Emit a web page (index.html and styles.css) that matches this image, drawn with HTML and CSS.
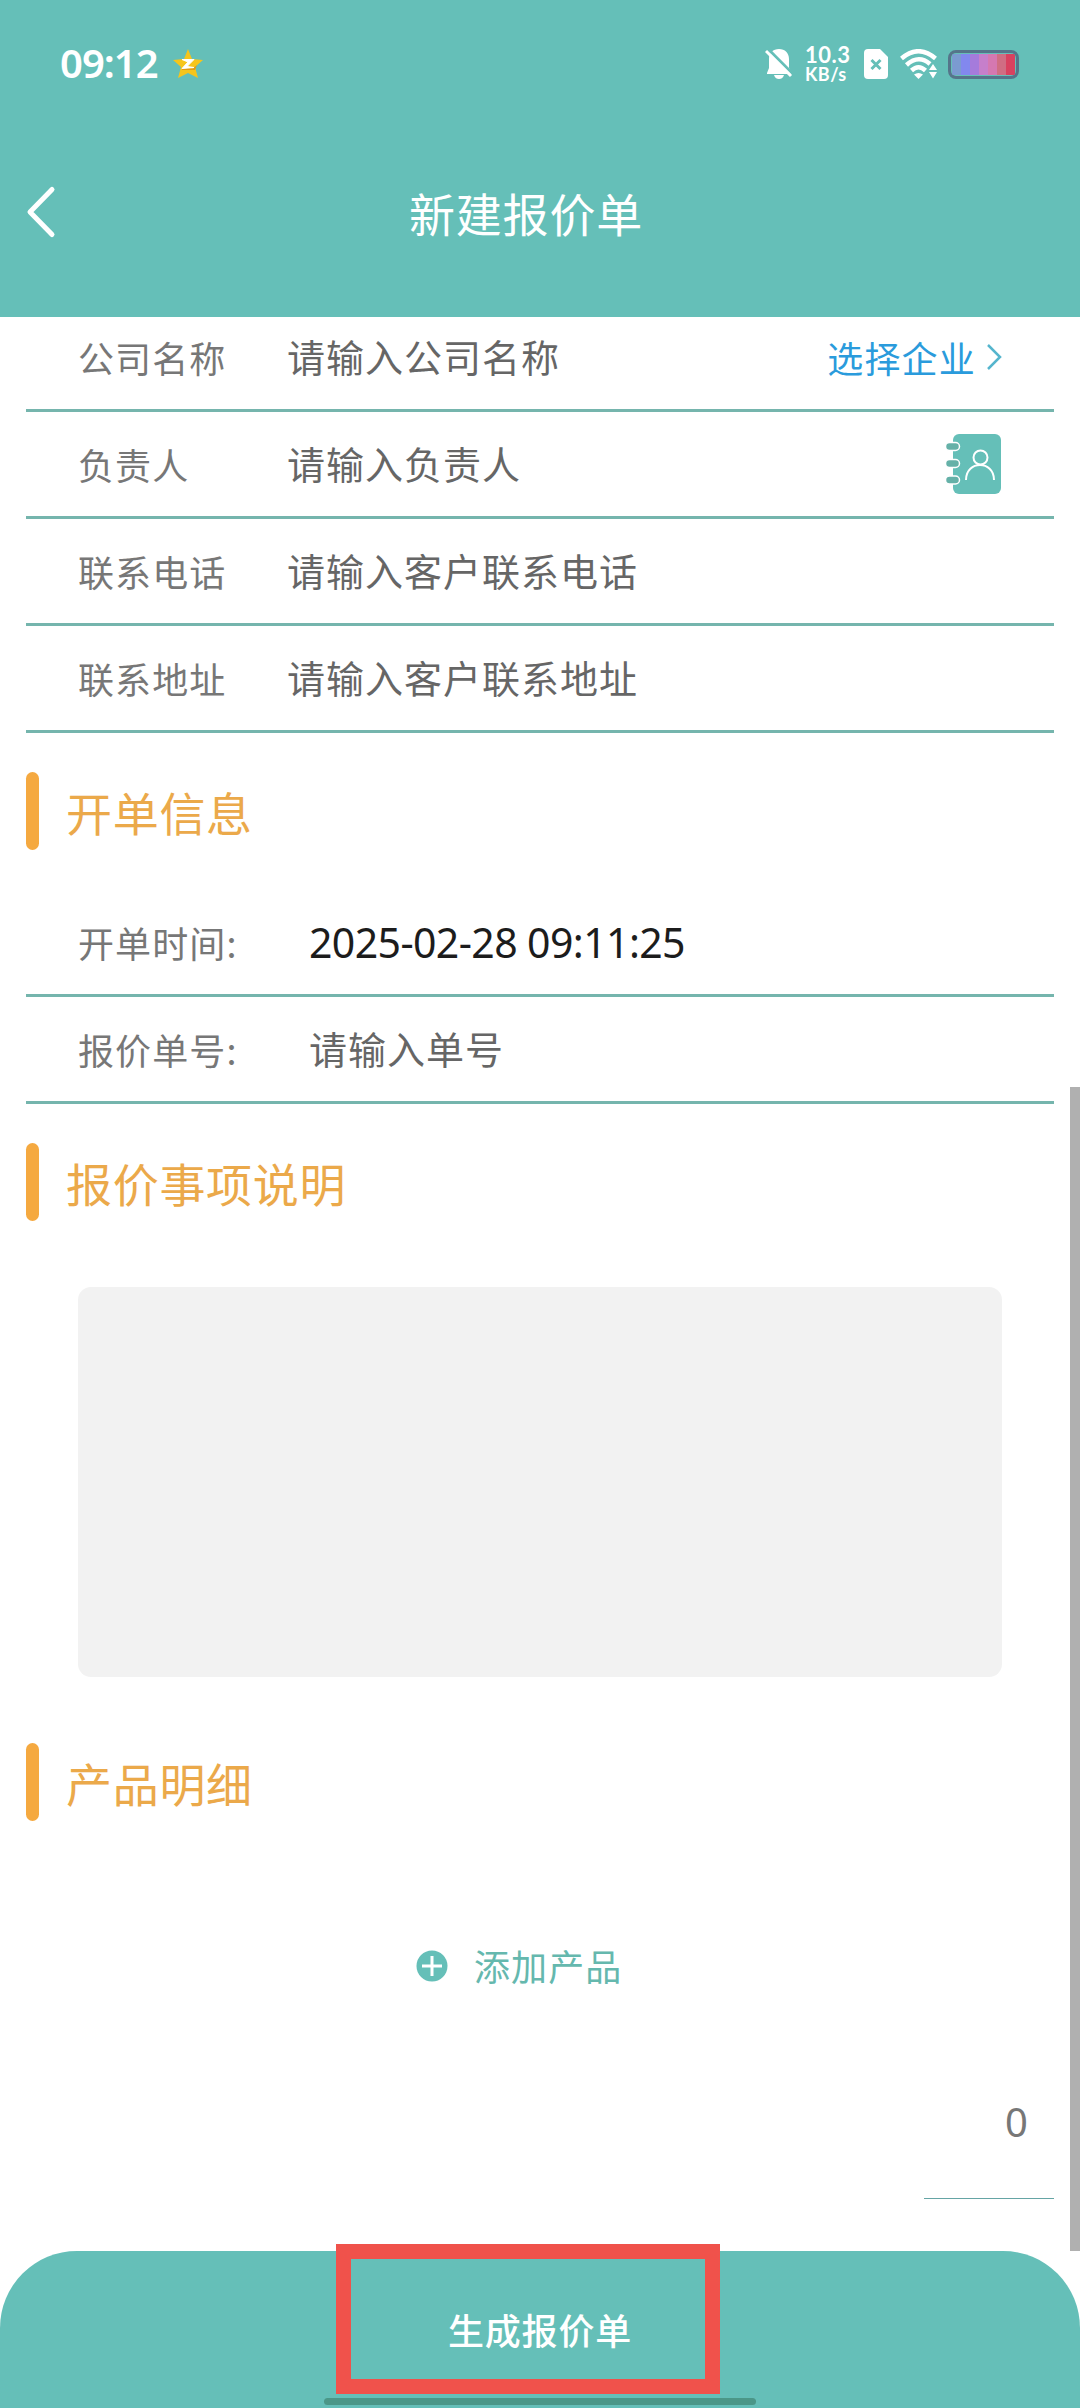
FILE: index.html
```html
<!DOCTYPE html>
<html lang="zh-CN">

<head>
    <meta charset="utf-8">
    <title>新建报价单</title>
    <link rel="stylesheet" href="styles.css">
</head>
<body>
    <div class="page">
        <div class="top">
            <div class="status-bar">
                <span class="clock">09:12</span>
                <svg class="star" width="32" height="32" viewBox="0 0 32 32">
                    <path d="M16 1 L20 11 L31 12 L23 19 L26 30 L16 25 L6 30 L9 19 L1 12 L12 11 Z" fill="#f6c51c" />
                    <path d="M10 20 L21 20.5 L25 17 L23 22 L10 22 Z" fill="#e39a12" />
                    <path d="M10 11.5 L22 11.5 L15 18.5 L22 19.5 L10 20.5 L16 14 Z" fill="#fff" stroke="#fff" />
                </svg>
                <div class="status-icons">
                    <svg class="bell" width="28" height="32" viewBox="0 0 28 32">
                        <path d="M14 1 C20 1 24 5 24 11 V20 L27 25 V26 H2 V25 L4 20 V11 C4 5 8 1 14 1 Z" fill="#fff" />
                        <path d="M9 27 H19 C18 30 16 31 14 31 C12 31 10 30 9 27 Z" fill="#fff" />
                        <path d="M3 1 L29 27" stroke="#65bfb8" stroke-width="3" />
                        <path d="M1 3 L26 28" stroke="#fff" stroke-width="3" />
                    </svg>
                    <div class="speed">
                        <div class="speed-num">10.3</div>
                        <div class="speed-unit">KB/s</div>
                    </div>
                    <svg class="sim" width="24" height="30" viewBox="0 0 24 30">
                        <path d="M4 0 H16 L24 8 V26 Q24 30 20 30 H4 Q0 30 0 26 V4 Q0 0 4 0 Z" fill="#fff" />
                        <path d="M7.500 11 L16.500 20 M16.500 11 L7.500 20" stroke="#65bfb8" stroke-width="3" />
                    </svg>
                    <svg class="wifi" width="37" height="30" viewBox="0 0 37 30">
                        <g fill="none" stroke="#fff" stroke-width="4.500">
                            <path d="M1.500 9.500 Q18.500 -5 35.500 9.500" />
                            <path d="M6.500 16 Q18.500 5 30 15" />
                            <path d="M11.500 21.500 Q18.500 15 25.500 21.500" />
                        </g>
                        <path d="M14 25.500 Q18.500 22.500 23 25.500 L18.500 30 Z" fill="#fff" />
                        <path d="M29 21 L33 15 L37 21 Z M29 23 H37 L33 29.500 Z" fill="#fff" />
                    </svg>
                    <div class="battery">
                        <i class="b1"></i><i class="b2"></i><i class="b3"></i><i class="b4"></i><i class="b5"></i><i class="b6"></i><i class="b7"></i>
                    </div>
                </div>
            </div>
            <div class="nav">
                <svg class="back" width="30" height="54" viewBox="0 0 30 54">
                    <path d="M26 4.500 L4 27 L26 49.500" fill="none" stroke="#fff" stroke-width="5" stroke-linecap="round" stroke-linejoin="round" />
                </svg>
                <div class="nav-title">新建报价单</div>
            </div>
        </div>

        <div class="content">
            <div class="rows customer">
                <div class="row">
                    <div class="label">公司名称</div>
                    <div class="value">请输入公司名称</div>
                    <div class="choose">选择企业
                        <svg class="arrow" width="16" height="28" viewBox="0 0 16 28">
                            <path d="M2 2 L14 14 L2 26" fill="none" stroke="#55b5cd" stroke-width="2.500" />
                        </svg>
                    </div>
                </div>
                <div class="row">
                    <div class="label">负责人</div>
                    <div class="value">请输入负责人</div>
                    <svg class="contacts" width="56" height="60" viewBox="0 0 56 60">
                        <rect x="7" y="0" width="48" height="60" rx="6" fill="#65bfb8" />
                        <g fill="#65b1a8" stroke="#fff" stroke-width="1.500">
                            <rect x="-.5" y="8.500" width="14" height="8" rx="4" />
                            <rect x="-.5" y="25.500" width="14" height="8" rx="4" />
                            <rect x="-.5" y="42" width="14" height="8" rx="4" />
                        </g>
                        <g fill="none" stroke="#fff" stroke-width="2">
                            <circle cx="34.500" cy="23.500" r="7" />
                            <path d="M20 46 C20 26 48 26 48 46" />
                        </g>
                    </svg>
                </div>
                <div class="row">
                    <div class="label">联系电话</div>
                    <div class="value">请输入客户联系电话</div>
                </div>
                <div class="row">
                    <div class="label">联系地址</div>
                    <div class="value">请输入客户联系地址</div>
                </div>
            </div>

            <div class="section-title">开单信息</div>
            <div class="rows order">
                <div class="row">
                    <div class="label">开单时间:</div>
                    <div class="value date">2025-02-28 09:11:25</div>
                </div>
                <div class="row">
                    <div class="label">报价单号:</div>
                    <div class="value">请输入单号</div>
                </div>
            </div>

            <div class="section-title">报价事项说明</div>
            <div class="remark"></div>

            <div class="section-title">产品明细</div>
            <div class="add">
                <svg width="32" height="32" viewBox="0 0 32 32">
                    <circle cx="16" cy="16" r="15.500" fill="#65bfb8" />
                    <path d="M16 6 V26 M6 16 H26" stroke="#fff" stroke-width="3" />
                </svg>
                <span>添加产品</span>
            </div>
            <div class="total">0</div>
            <div class="scrollbar"></div>
        </div>

        <div class="footer">
            <div class="submit">生成报价单</div>
            <div class="mark"></div>
            <div class="home-bar"></div>
        </div>
    </div>
</body>

</html>
```

FILE: styles.css
```css
body {
    margin: 0;
    background-color: white;
    font-family: "Noto Sans CJK SC", sans-serif;
}

.page {
    display: flex;
    flex-direction: column;
    width: 1080px;
    height: 2408px;
    overflow: hidden;
}

.top {
    height: 317px;
    background-color: #65bfb8;
    color: white;
}

.status-bar {
    display: flex;
    align-items: center;
    height: 128px;
    padding-left: 60px;
    padding-right: 61px;
}

.clock {
    width: 112px;
    padding-bottom: 3px;
    font-family: "Noto Sans", sans-serif;
    font-size: 40px;
    font-weight: 600;
    letter-spacing: -1px;
}

.status-icons {
    display: flex;
    align-items: center;
    margin-left: auto;
}

.speed {
    width: 46px;
    margin-left: 12px;
    margin-right: 13px;
    font-family: Lato, sans-serif;
    font-weight: 700;
    white-space: nowrap;
}

.speed-num {
    font-size: 22px;
    line-height: 20px;
    letter-spacing: 0.5px;
}

.speed-unit {
    font-size: 18px;
    line-height: 19px;
    letter-spacing: 0.5px;
}

.wifi {
    margin-left: 12px;
    margin-right: 11px;
}

.battery {
    display: flex;
    box-sizing: border-box;
    width: 71px;
    height: 29px;
    padding: 1px;
    border: 3px solid #55758a;
    border-radius: 8px;
    overflow: hidden;
}

.battery i {
    flex: 1;
}

.b1 { background-color: #7b9bd0; }
.b2 { background-color: #8288ee; }
.b3 { background-color: #a57bdc; }
.b4 { background-color: #c67fcb; }
.b5 { background-color: #d578b1; }
.b6 { background-color: #d06d83; }
.b7 { background-color: #d9415f; }

.nav {
    display: flex;
    align-items: center;
    height: 168px;
}

.back {
    margin-left: 26px;
}

.nav-title {
    margin-left: 353px;
    font-size: 46px;
    letter-spacing: 0.8px;
}

.content {
    position: relative;
    height: 1934px;
    overflow: hidden;
}

.rows {
    margin: 0 26px;
}

/* list is scrolled a little under the header */
.customer {
    margin-top: -12px;
}

.row {
    display: flex;
    align-items: center;
    height: 104px;
    padding-left: 52px;
    padding-right: 52px;
    border-bottom: 3px solid #75b5ad;
}

.label {
    width: 209px;
    padding-bottom: 1px;
    color: #777;
    font-size: 36px;
    letter-spacing: 1.1px;
}

.order .label {
    width: 231px;
}

.value {
    padding-bottom: 3px;
    color: #666;
    font-size: 38px;
    letter-spacing: 1px;
}

.value.date {
    padding-bottom: 0;
    color: #1c1c1c;
    font-family: "Noto Sans", sans-serif;
    font-size: 41px;
    letter-spacing: -0.6px;
}

.choose {
    display: flex;
    align-items: center;
    margin-left: auto;
    color: #2a9bdc;
    font-size: 36px;
    letter-spacing: 1.2px;
}

.arrow {
    margin-left: 10px;
}

.contacts {
    margin-left: auto;
}

.section-title {
    display: flex;
    align-items: center;
    height: 78px;
    margin: 39px 26px 40px;
    color: #eba94a;
    font-size: 46px;
    line-height: 76px;
    letter-spacing: 0.7px;
}

.section-title::before {
    content: "";
    width: 13px;
    height: 78px;
    margin-right: 27px;
    border-radius: 7px;
    background-color: #f5a940;
}

.remark {
    height: 390px;
    margin: 66px 78px;
    border-radius: 13px;
    background-color: #f2f2f2;
}

.add {
    display: flex;
    align-items: center;
    height: 90px;
    margin-top: 100px;
    padding-left: 416px;
    color: #65b8ae;
    font-size: 36px;
    letter-spacing: 1.1px;
}

.add span {
    margin-left: 26px;
    padding-bottom: 3px;
}

.total {
    box-sizing: border-box;
    width: 130px;
    height: 152px;
    margin-top: 36px;
    margin-left: 924px;
    padding-right: 26px;
    border-bottom: 1px solid #65a5a5;
    color: #777;
    font-family: "Noto Sans", sans-serif;
    font-size: 40px;
    line-height: 149px;
    text-align: right;
}

.scrollbar {
    position: absolute;
    top: 770px;
    right: 0;
    width: 10px;
    height: 1164px;
    background-color: #b0b0b0;
}

.footer {
    position: relative;
    height: 157px;
    border-radius: 77px 77px 0 0;
    background-color: #65bfb8;
}

.submit {
    color: white;
    font-size: 36px;
    font-weight: 500;
    letter-spacing: 0.8px;
    line-height: 156px;
    text-align: center;
}

/* red frame round the button */
.mark {
    position: absolute;
    box-sizing: border-box;
    top: -7px;
    left: 336px;
    width: 384px;
    height: 150px;
    border: 15px solid #f0524b;
}

.home-bar {
    position: absolute;
    bottom: 3px;
    left: 324px;
    width: 432px;
    height: 7px;
    border-radius: 4px;
    background-color: #4b9788;
}
```
